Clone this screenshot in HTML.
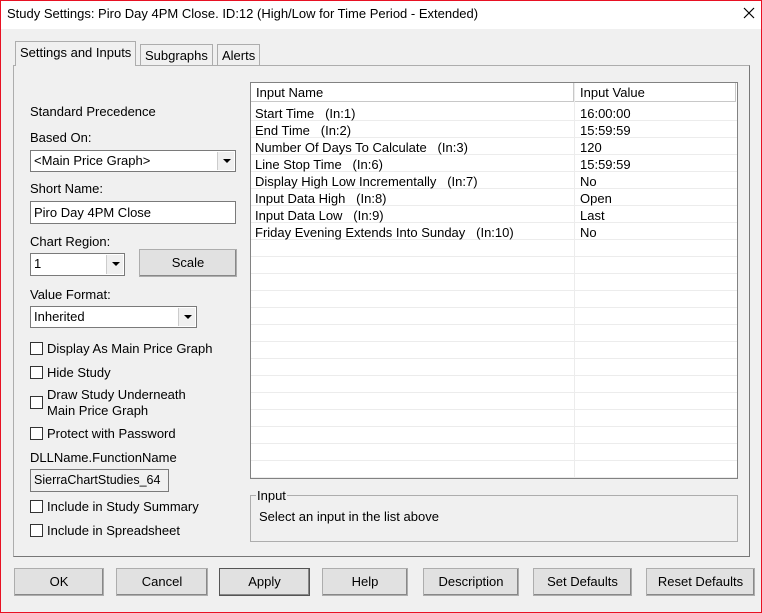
<!DOCTYPE html><html><head><style>
*{box-sizing:border-box;margin:0;padding:0}
body{width:762px;height:613px;background:#f0f0f0;font-family:"Liberation Sans",Arial,sans-serif;font-size:13px;color:#000;position:relative;overflow:hidden}
.a{position:absolute;white-space:nowrap}
.win{position:absolute;left:0;top:0;width:762px;height:613px;border:1px solid #e81123}
.title{left:1px;top:1px;width:760px;height:28px;background:#fff}
.tab{border:1px solid #adadad;border-bottom:none;background:#f0f0f0;padding:3px 4px}
.panel{left:13px;top:65px;width:737px;height:492px;border:1px solid #adadad;border-right-color:#777;border-bottom-color:#777;background:#f0f0f0}
.cb{width:13px;height:13px;border:1px solid #333;background:#fff}
.edit{border:1px solid #7a7a7a;background:#fff;padding:3px 3px}
.combo{border:1px solid #7a7a7a;background:#fff;padding:2px 3px}
.dd{position:absolute;right:1px;top:1px;width:17px;bottom:1px;background:#f0f0f0;border-left:1px solid #ccc}
.dd:after{content:"";position:absolute;left:5px;top:7px;border-left:4px solid transparent;border-right:4px solid transparent;border-top:4px solid #000}
.btn{border:1px solid #adadad;background:#e1e1e1;text-align:center;line-height:26px;box-shadow:inset -1px -1px 0 #888}
</style></head><body>
<div class="win"></div>
<div class="a title"></div>
<div class="a" style="left:7px;top:6px">Study Settings: Piro Day 4PM Close. ID:12 (High/Low for Time Period - Extended)</div>
<svg class="a" style="left:743px;top:7px" width="12" height="12"><path d="M1 1L11 11M11 1L1 11" stroke="#000" stroke-width="1.2"/></svg>
<div class="a panel"></div>
<div class="a tab" style="left:15px;top:41px;height:25px;background:#f0f0f0;z-index:2">Settings and Inputs</div>
<div class="a tab" style="left:140px;top:44px;height:21px">Subgraphs</div>
<div class="a tab" style="left:217px;top:44px;height:21px">Alerts</div>
<div class="a" style="left:30px;top:104px">Standard Precedence</div>
<div class="a" style="left:30px;top:130px">Based On:</div>
<div class="a combo" style="left:30px;top:150px;width:206px;height:22px">&lt;Main Price Graph&gt;<div class="dd"></div></div>
<div class="a" style="left:30px;top:181px">Short Name:</div>
<div class="a edit" style="left:30px;top:201px;width:206px;height:23px">Piro Day 4PM Close</div>
<div class="a" style="left:30px;top:234px">Chart Region:</div>
<div class="a combo" style="left:30px;top:253px;width:95px;height:23px">1<div class="dd"></div></div>
<div class="a btn" style="left:139px;top:249px;width:98px;height:28px">Scale</div>
<div class="a" style="left:30px;top:287px">Value Format:</div>
<div class="a combo" style="left:30px;top:306px;width:167px;height:22px">Inherited<div class="dd"></div></div>
<div class="a cb" style="left:30px;top:342px"></div><div class="a" style="left:47px;top:341px">Display As Main Price Graph</div>
<div class="a cb" style="left:30px;top:366px"></div><div class="a" style="left:47px;top:365px">Hide Study</div>
<div class="a cb" style="left:30px;top:396px"></div><div class="a" style="left:47px;top:387px;line-height:16px">Draw Study Underneath<br>Main Price Graph</div>
<div class="a cb" style="left:30px;top:427px"></div><div class="a" style="left:47px;top:426px">Protect with Password</div>
<div class="a" style="left:30px;top:450px">DLLName.FunctionName</div>
<div class="a edit" style="left:30px;top:469px;width:139px;height:23px;background:#f0f0f0;font-size:12.5px">SierraChartStudies_64</div>
<div class="a cb" style="left:30px;top:500px"></div><div class="a" style="left:47px;top:499px">Include in Study Summary</div>
<div class="a cb" style="left:30px;top:524px"></div><div class="a" style="left:47px;top:523px">Include in Spreadsheet</div>

<div class="a" style="left:250px;top:82px;width:488px;height:397px;border:1px solid #828282;background:#fff;background-image:repeating-linear-gradient(#fff 0,#fff 16px,#ececec 16px,#ececec 17px);background-position:0 21px;background-origin:padding-box"></div>
<div class="a" style="left:251px;top:83px;width:486px;height:21px;background:#fff"></div>
<div class="a" style="left:574px;top:83px;width:1px;height:395px;background:#ececec"></div>
<div class="a" style="left:251px;top:83px;width:323px;height:19px;border-right:1px solid #c8c8c8;border-bottom:1px solid #c8c8c8;padding:2px 5px">Input Name</div>
<div class="a" style="left:575px;top:83px;width:161px;height:19px;border-right:1px solid #c8c8c8;border-bottom:1px solid #c8c8c8;padding:2px 5px">Input Value</div>
<div class="a" style="left:255px;top:105px;line-height:17px">Start Time &nbsp;&nbsp;(In:1)<br>End Time &nbsp;&nbsp;(In:2)<br>Number Of Days To Calculate &nbsp;&nbsp;(In:3)<br>Line Stop Time &nbsp;&nbsp;(In:6)<br>Display High Low Incrementally &nbsp;&nbsp;(In:7)<br>Input Data High &nbsp;&nbsp;(In:8)<br>Input Data Low &nbsp;&nbsp;(In:9)<br>Friday Evening Extends Into Sunday &nbsp;&nbsp;(In:10)</div>
<div class="a" style="left:580px;top:105px;line-height:17px">16:00:00<br>15:59:59<br>120<br>15:59:59<br>No<br>Open<br>Last<br>No</div>

<div class="a" style="left:250px;top:495px;width:488px;height:47px;border:1px solid #adadad"></div>
<div class="a" style="left:256px;top:488px;background:#f0f0f0;padding:0 1px">Input</div>
<div class="a" style="left:259px;top:509px">Select an input in the list above</div>

<div class="a btn" style="left:14px;top:568px;width:90px;height:28px">OK</div>
<div class="a btn" style="left:116px;top:568px;width:92px;height:28px">Cancel</div>
<div class="a btn" style="left:219px;top:568px;width:91px;height:28px;border-color:#555">Apply</div>
<div class="a btn" style="left:322px;top:568px;width:86px;height:28px">Help</div>
<div class="a btn" style="left:423px;top:568px;width:96px;height:28px">Description</div>
<div class="a btn" style="left:533px;top:568px;width:99px;height:28px">Set Defaults</div>
<div class="a btn" style="left:646px;top:568px;width:109px;height:28px">Reset Defaults</div>
</body></html>
